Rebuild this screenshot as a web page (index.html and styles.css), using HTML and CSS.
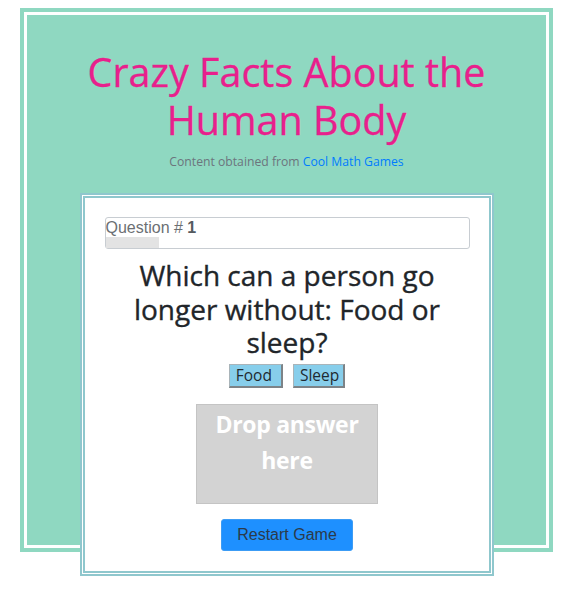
FILE: index.html
```html
<!DOCTYPE html>
<html lang="en">
<head>
<meta charset="utf-8">
<title>Crazy Facts About the Human Body</title>
<link rel="stylesheet" href="styles.css">
</head>
<body>
  <div class="stage">
    <h1 class="title">Crazy Facts About the Human Body</h1>
    <p class="credit">Content obtained from <a href="#" class="credit-link">Cool Math Games</a></p>
    <div class="card">
      <div class="progress-box">
        <div class="progress-label">Question # <b>1</b></div>
        <div class="progress-track"><div class="progress-fill" style="width: 53px"></div></div>
      </div>
      <h3 class="question">Which can a person go longer without: Food or sleep?</h3>
      <div class="answers">
        <span class="answer answer-food">Food</span>
        <span class="answer answer-sleep">Sleep</span>
      </div>
      <div class="dropzone">Drop answer here</div>
      <div class="restart-row">
        <button class="restart">Restart Game</button>
      </div>
    </div>
  </div>
</body>
</html>
```
FILE: styles.css
```css
html, body {
  margin: 0;
  padding: 0;
  background: #ffffff;
}

body {
  min-height: 597px;
  box-sizing: border-box;
  padding: 12px 0 20px 24px;
  font-family: "Open Sans", "Noto Sans", sans-serif;
}

.stage {
  box-sizing: border-box;
  width: 525px;
  height: 536px;
  background: #8fd8c1;
  border: 3px solid #ffffff;
  box-shadow: 0 0 0 4px #8fd8c1;
  padding-top: 33px;
  text-align: center;
}

.title {
  margin: 0 auto 8px;
  width: 440px;
  font-weight: 400;
  font-size: 39.5px;
  line-height: 48px;
  color: #e8208c;
  -webkit-text-stroke: 0.3px #e8208c;
}

.credit {
  margin: 0 0 22px;
  font-size: 12.2px;
  line-height: 19px;
  color: #6c757d;
}

.credit-link {
  color: #007bff;
  text-decoration: none;
}

.card {
  box-sizing: border-box;
  width: 414px;
  margin: 0 auto;
  background: #ffffff;
  border: 5px double #8fc7cd;
  padding: 19px 19px 20px 20px;
}

.progress-box {
  box-sizing: border-box;
  height: 32px;
  border: 1px solid #c8cdd2;
  border-radius: 3px;
  text-align: left;
}

.progress-label {
  font-family: "Liberation Sans", Arial, sans-serif;
  font-size: 16px;
  line-height: 19px;
  color: #6c6f73;
}

.progress-label b {
  color: #555a5f;
}

.progress-track {
  height: 11px;
}

.progress-fill {
  height: 100%;
  background: #e3e3e3;
}

.question {
  margin: 10px 0 4px;
  font-weight: 500;
  font-size: 28px;
  line-height: 33.6px;
  color: #212529;
  -webkit-text-stroke: 0.35px #212529;
}

.answers {
  display: flex;
  justify-content: center;
  gap: 10px;
}

.answer {
  box-sizing: border-box;
  height: 24px;
  padding: 0 4px 0 6px;
  background: #87ceeb;
  border-top: 1px solid #a9b4b9;
  border-left: 1px solid #a9b4b9;
  border-right: 2px solid #7d8387;
  border-bottom: 2px solid #7d8387;
  font-size: 15.5px;
  line-height: 21px;
  color: #1f2a30;
}

.answer-food {
  padding-right: 9px;
}

.dropzone {
  box-sizing: border-box;
  width: 182px;
  height: 100px;
  margin: 16px auto 0;
  padding-top: 1px;
  background: #d3d3d3;
  border: 1px solid #c4c4c4;
  color: #ffffff;
  font-weight: 700;
  font-size: 23px;
  letter-spacing: -0.3px;
  line-height: 36px;
}

.restart-row {
  margin-top: 15px;
}

.restart {
  box-sizing: border-box;
  width: 132px;
  height: 32px;
  background: #1e90ff;
  border: 1px solid #3c9cf5;
  border-radius: 3px;
  font-family: "Liberation Sans", Arial, sans-serif;
  font-size: 16px;
  color: #2b3a4a;
  padding: 0;
}
```
